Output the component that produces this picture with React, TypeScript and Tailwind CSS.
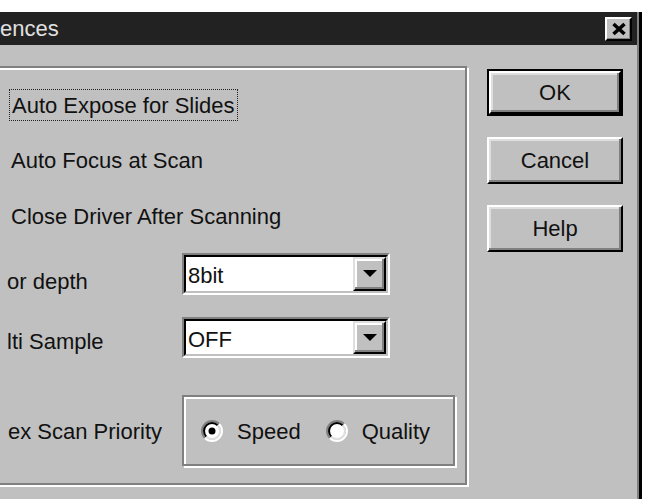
import React from "react";

const font = "font-['Liberation_Sans',Arial,sans-serif]";

function Radio({ checked }: { checked?: boolean }) {
  // win95 style round radio, drawn at ~2x
  const c = 11;
  const arc = (r: number, first: boolean) => {
    const d = r * 0.7071;
    return first
      ? `M ${c - d} ${c + d} A ${r} ${r} 0 0 1 ${c + d} ${c - d}`
      : `M ${c + d} ${c - d} A ${r} ${r} 0 0 1 ${c - d} ${c + d}`;
  };
  return (
    <svg width="22" height="22" viewBox="0 0 22 22" className="shrink-0">
      <circle cx={c} cy={c} r={8} fill="#fff" />
      <path d={arc(10, true)} stroke="#808080" strokeWidth="2" fill="none" />
      <path d={arc(10, false)} stroke="#ffffff" strokeWidth="2" fill="none" />
      <path d={arc(8, true)} stroke="#000" strokeWidth="2" fill="none" />
      <path d={arc(8, false)} stroke="#dfdfdf" strokeWidth="2" fill="none" />
      {checked && <circle cx={c} cy={c} r={3.5} fill="#000" />}
    </svg>
  );
}

function Combo({ value }: { value: string }) {
  return (
    <div className="w-[208px] h-full border-2 border-t-[#808080] border-l-[#808080] border-r-white border-b-white">
      <div className="h-full border-2 border-t-black border-l-black border-r-[#c0c0c0] border-b-[#c0c0c0] bg-white flex items-center">
        <span className="flex-1 pl-[2px] pt-[4px] text-[22px] leading-none">{value}</span>
        <div className="w-[33px] h-full bg-[#c0c0c0] border-2 border-t-[#dfdfdf] border-l-[#dfdfdf] border-r-black border-b-black shadow-[inset_-2px_-2px_0_#808080,inset_2px_2px_0_#fff] flex items-center justify-center">
          <svg width="14" height="8" viewBox="0 0 14 8">
            <path d="M0 0 H14 L7 7 Z" fill="#000" />
          </svg>
        </div>
      </div>
    </div>
  );
}

function Button({ label, isDefault }: { label: string; isDefault?: boolean }) {
  const inner = (
    <div className="w-full h-full bg-[#c0c0c0] border-2 border-t-white border-l-white border-r-black border-b-black shadow-[inset_-2px_-2px_0_#808080,inset_2px_2px_0_#dfdfdf] flex items-center justify-center text-[22px] leading-none">
      {label}
    </div>
  );
  return isDefault ? (
    <div className="w-[136px] h-[47px] border-2 border-black">{inner}</div>
  ) : (
    <div className="w-[136px] h-[47px]">{inner}</div>
  );
}

export default function App() {
  return (
    <div className={`w-[646px] h-[499px] bg-white overflow-hidden pt-[12px] text-[#111] ${font}`}>
      <div className="w-[642px] h-[487px] bg-[#c0c0c0] border-r-[3px] border-black shadow-[inset_-2px_0_0_#808080] flex flex-col">
        {/* title bar */}
        <div className="h-[33px] mr-[2px] bg-[#222] flex items-center justify-between pr-[5px]">
          <span className="text-[22px] leading-none text-[#e0e0e0] pt-[1px]">ences</span>
          <div className="w-[27px] h-[24px] bg-[#c0c0c0] border-2 border-t-white border-l-white border-r-black border-b-black shadow-[inset_-1px_-1px_0_#808080] flex items-center justify-center">
            <svg width="16" height="14" viewBox="0 0 16 14">
              <path d="M2.5 2 L13.5 12 M13.5 2 L2.5 12" stroke="#000" strokeWidth="3.6" />
            </svg>
          </div>
        </div>

        <div className="flex pt-[21px]">
          {/* options group */}
          <div className="-ml-[12px] w-[479px] h-[419px] border-2 border-[#808080] shadow-[inset_2px_2px_0_#fff,2px_2px_0_#fff] flex flex-col">
            <div className="ml-[19px] mt-[21px] h-[32px] flex">
              <span className="border border-dotted border-[#222] px-[2px] pt-[2px] flex items-center text-[22px] leading-none">
                Auto Expose for Slides
              </span>
            </div>
            <div className="ml-[21px] mt-[23px] h-[32px] pt-[2px] flex items-center text-[22px] leading-none">
              Auto Focus at Scan
            </div>
            <div className="ml-[21px] mt-[24px] h-[32px] pt-[2px] flex items-center text-[22px] leading-none">
              Close Driver After Scanning
            </div>

            <div className="mt-[21px] h-[42px] flex pl-[17px]">
              <span className="w-[175px] pt-[16px] flex items-center text-[22px] leading-none">or depth</span>
              <Combo value="8bit" />
            </div>
            <div className="mt-[22px] h-[41px] flex pl-[17px]">
              <span className="w-[175px] pt-[9px] flex items-center text-[22px] leading-none">lti Sample</span>
              <Combo value="OFF" />
            </div>

            <div className="mt-[37px] h-[71px] flex pl-[18px]">
              <span className="w-[174px] pt-[2px] flex items-center text-[22px] leading-none">ex Scan Priority</span>
              <div className="w-[273px] h-full border-2 border-[#808080] shadow-[inset_2px_2px_0_#fff,2px_2px_0_#fff] flex items-center pl-[17px]">
                <Radio checked />
                <span className="ml-[14px] pt-[2px] text-[22px] leading-none">Speed</span>
                <span className="ml-[25px] flex">
                  <Radio />
                </span>
                <span className="ml-[14px] pt-[2px] text-[22px] leading-none">Quality</span>
              </div>
            </div>
          </div>

          {/* buttons */}
          <div className="ml-[20px] mt-[3px] flex flex-col gap-[21px]">
            <Button label="OK" isDefault />
            <Button label="Cancel" />
            <Button label="Help" />
          </div>
        </div>
      </div>
    </div>
  );
}
